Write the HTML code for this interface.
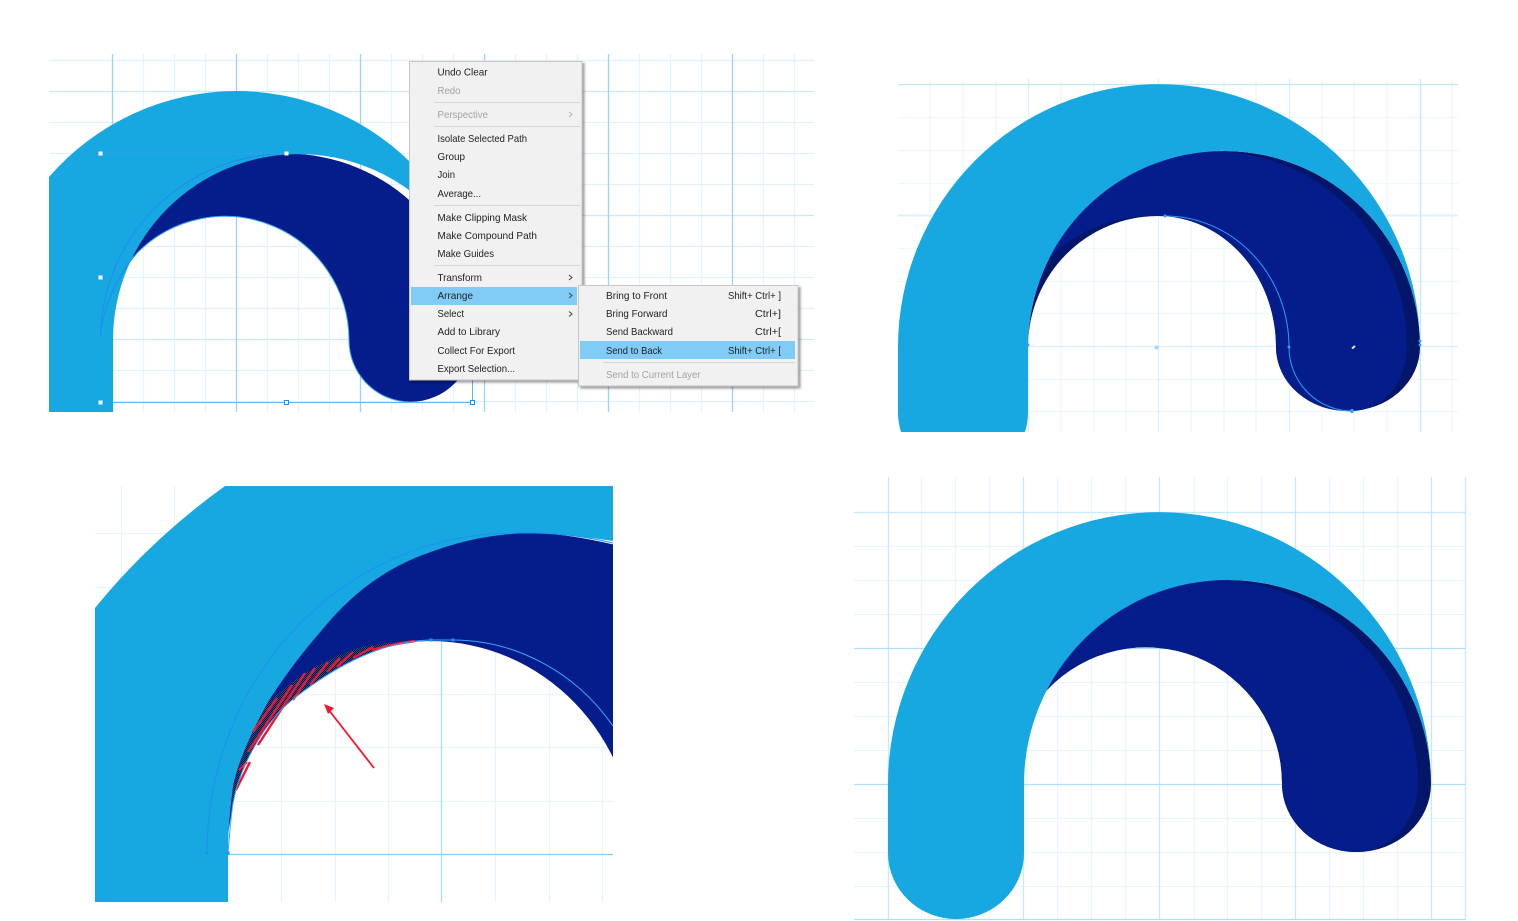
<!DOCTYPE html>
<html><head><meta charset="utf-8"><title>Arrange</title>
<style>
html,body{margin:0;padding:0;background:#fff;width:1518px;height:921px;overflow:hidden}
svg{display:block}
text{font-family:"Liberation Sans",sans-serif;font-size:10.4px;fill:#222}
.g{fill:#a3a3a3}
</style></head><body>
<svg width="1518" height="921" viewBox="0 0 1518 921" xmlns="http://www.w3.org/2000/svg">
<defs>
<clipPath id="c1"><rect x="49" y="54" width="765" height="358"/></clipPath>
<clipPath id="c2"><rect x="898" y="79" width="560" height="353"/></clipPath>
<clipPath id="c3"><rect x="95" y="486" width="518" height="416"/></clipPath>
<filter id="sh" x="-5%" y="-5%" width="112%" height="112%"><feDropShadow dx="2" dy="2" stdDeviation="1.200" flood-color="#000" flood-opacity=".4"/></filter>
<pattern id="d" width="2" height="2" patternUnits="userSpaceOnUse"><rect width="2" height="2" fill="#1b4f8f"/><rect width="1" height="1" fill="#03103a"/><rect x="1" y="1" width="1" height="1" fill="#03103a"/></pattern>
</defs>

<!-- PANEL 1 -->
<g clip-path="url(#c1)" fill="none">
<path stroke="#e4f3fe" stroke-width="1.300" d="M143.500 54V412M174.500 54V412M205.500 54V412M267.500 54V412M298.500 54V412M329.500 54V412M391.500 54V412M422.500 54V412M453.500 54V412M515.500 54V412M546.500 54V412M577.500 54V412M639.500 54V412M670.500 54V412M701.500 54V412M763.500 54V412M794.500 54V412"/>
<path stroke="#e0f1fe" stroke-width="1.300" d="M49 60.500H814M49 122.500H814M49 153.500H814M49 184.500H814M49 246.500H814M49 277.500H814M49 308.500H814M49 370.500H814M49 401.500H814"/>
<path stroke="#cdeafc" stroke-width="1.300" d="M49 91.500H814M49 215.500H814M49 339.500H814"/>
<path stroke="#96d5fa" stroke-width="1.300" d="M112.500 54V412M236.500 54V412M360.500 54V412M484.500 54V412M608.500 54V412M732.500 54V412"/>
<path fill="#051d8b" d="M99.500 340A186.500 186.500 0 0 1 472.500 340A61.750 61.750 0 0 1 349 340A124 124 0 0 0 101 340Z"/>
<path fill="#17a8e2" d="M49 412V177A249 249 0 0 1 236 91A249 249 0 0 1 485 340A186 186 0 0 0 113 340V412Z"/>
<path stroke="#1c8df5" stroke-width="1" d="M100.500 337A186.500 186.500 0 0 1 286 153.500"/>
<path stroke="#1c8df5" stroke-width="1" d="M100.500 337C103 305 118 275 137 253"/>
<path stroke="#3aa5f8" stroke-width="1" d="M137 253A124 124 0 0 1 349 340A61.750 61.750 0 0 0 411 402"/>
<path stroke="#5cb5f8" stroke-width="1" d="M113 402.500H472.500V380"/>
<path stroke="#2fa0e8" stroke-width="1" d="M100 153.500H286"/>
<g fill="#fff"><rect x="98.500" y="151.500" width="4" height="4"/><rect x="284.500" y="151.500" width="4" height="4"/><rect x="98.500" y="275.500" width="4" height="4"/><rect x="98.500" y="400.500" width="4" height="4"/></g>
<g fill="#fff" stroke="#1c8df5"><rect x="284.500" y="400.500" width="4" height="4"/><rect x="470.500" y="400.500" width="4" height="4"/></g>
</g>

<!-- Main context menu -->
<g>
<rect x="409.500" y="61.500" width="172.500" height="318.500" fill="#f1f1f1" stroke="#c8c8c8" filter="url(#sh)"/>
<path stroke="#d6d6d6" d="M434 102.500H580M434 126.500H580M434 205.500H580M434 265.500H580"/>
<rect x="411" y="287" width="166" height="18" fill="#80ccf7"/>
<text x="437.500" y="75.500" textLength="50" lengthAdjust="spacingAndGlyphs">Undo Clear</text>
<text x="437.500" y="94" class="g" textLength="23" lengthAdjust="spacingAndGlyphs">Redo</text>
<text x="437.500" y="118" class="g" textLength="50.500" lengthAdjust="spacingAndGlyphs">Perspective</text>
<text x="437.500" y="142" textLength="89.500" lengthAdjust="spacingAndGlyphs">Isolate Selected Path</text>
<text x="437.500" y="160" textLength="27.500" lengthAdjust="spacingAndGlyphs">Group</text>
<text x="437.500" y="178" textLength="17.500" lengthAdjust="spacingAndGlyphs">Join</text>
<text x="437.500" y="197" textLength="43.500" lengthAdjust="spacingAndGlyphs">Average...</text>
<text x="437.500" y="221" textLength="89.500" lengthAdjust="spacingAndGlyphs">Make Clipping Mask</text>
<text x="437.500" y="239" textLength="99.500" lengthAdjust="spacingAndGlyphs">Make Compound Path</text>
<text x="437.500" y="257" textLength="56.500" lengthAdjust="spacingAndGlyphs">Make Guides</text>
<text x="437.500" y="281" textLength="44.500" lengthAdjust="spacingAndGlyphs">Transform</text>
<text x="437.500" y="299" textLength="35.500" lengthAdjust="spacingAndGlyphs">Arrange</text>
<text x="437.500" y="317" textLength="26.500" lengthAdjust="spacingAndGlyphs">Select</text>
<text x="437.500" y="335" textLength="62.500" lengthAdjust="spacingAndGlyphs">Add to Library</text>
<text x="437.500" y="354" textLength="77.500" lengthAdjust="spacingAndGlyphs">Collect For Export</text>
<text x="437.500" y="372" textLength="77.500" lengthAdjust="spacingAndGlyphs">Export Selection...</text>
<g fill="none" stroke-width="1">
<path stroke="#b5b5b5" d="M569 112l3 2.500l-3 2.500"/>
<path stroke="#444" d="M569 275l3 2.500l-3 2.500M569 293l3 2.500l-3 2.500M569 311.500l3 2.500l-3 2.500"/>
</g>
</g>

<!-- Submenu -->
<g>
<rect x="578.500" y="285.500" width="219.500" height="100.500" fill="#f1f1f1" stroke="#c8c8c8" filter="url(#sh)"/>
<rect x="580" y="341" width="215" height="18" fill="#80ccf7"/>
<path stroke="#d6d6d6" d="M603 362.500H795"/>
<text x="606" y="299" textLength="61" lengthAdjust="spacingAndGlyphs">Bring to Front</text>
<text x="606" y="317" textLength="61.500" lengthAdjust="spacingAndGlyphs">Bring Forward</text>
<text x="606" y="335" textLength="67" lengthAdjust="spacingAndGlyphs">Send Backward</text>
<text x="606" y="354" textLength="56" lengthAdjust="spacingAndGlyphs">Send to Back</text>
<text x="606" y="378" class="g" textLength="94.500" lengthAdjust="spacingAndGlyphs">Send to Current Layer</text>
<text x="728" y="299" textLength="53" lengthAdjust="spacingAndGlyphs">Shift+ Ctrl+ ]</text>
<text x="755" y="317" textLength="26" lengthAdjust="spacingAndGlyphs">Ctrl+]</text>
<text x="755" y="335" textLength="26" lengthAdjust="spacingAndGlyphs">Ctrl+[</text>
<text x="728" y="354" textLength="53" lengthAdjust="spacingAndGlyphs">Shift+ Ctrl+ [</text>
</g>

<!-- PANEL 2 -->
<g clip-path="url(#c2)" fill="none">
<path stroke="#ecf7fe" stroke-width="1.300" d="M930 79V432M963 79V432M996 79V432M1061 79V432M1094 79V432M1126 79V432M1191 79V432M1224 79V432M1256 79V432M1322 79V432M1354 79V432M1387 79V432M1452 79V432M898 117.500H1458M898 150.500H1458M898 183.500H1458M898 248.500H1458M898 281.500H1458M898 313.500H1458M898 379.500H1458M898 411.500H1458"/>
<path stroke="#dbeffd" stroke-width="1.300" d="M1028.500 79V432M1158.500 79V432M1289.500 79V432M898 346.500H1458"/>
<path stroke="#dff1fd" stroke-width="2" d="M898 215.500H1458"/>
<path stroke="#c2e6fb" stroke-width="1.300" d="M1420.500 79V432M898 84.500H1458"/>
<path fill="#03166a" d="M1028 347A196 196 0 0 1 1420 347A72 64 0 0 1 1276 347A118 131 0 0 0 1158 216A130 131 0 0 0 1028 347Z"/>
<path fill="#041d8b" d="M1046 262L1030 240L1100 170L1211 140L1211 151A196 196 0 0 1 1407 347A55 64 0 0 1 1352 411A72 64 0 0 1 1276 347A118 131 0 0 0 1158 216C1110 214 1070 235 1046 262Z"/>
<path fill="#17a8e2" d="M901 432A65 65 0 0 1 898 412V347A261 263 0 0 1 1420 347A196 196 0 0 0 1028 347V412A65 65 0 0 1 1025 432Z"/>
<path stroke="#2e9bf5" stroke-width="1" d="M1165 216A124 131 0 0 1 1289 347A63 64 0 0 0 1352 411"/>
<g fill="#3b9ff6"><circle cx="1165" cy="216" r="1.500"/><circle cx="1289" cy="347" r="1.500"/><circle cx="1352" cy="411" r="2"/><circle cx="1420" cy="341" r="1.500"/><circle cx="1420" cy="345" r="1.500"/><circle cx="1028" cy="345" r="1.500"/><circle cx="1222" cy="150" r="1.200"/></g>
<circle cx="1156.500" cy="347.500" r="2" fill="#a7d4fb"/>
<path stroke="#dfeefc" stroke-width="2" d="M1352 348.500l3-2.500"/>
</g>

<!-- PANEL 3 -->
<g clip-path="url(#c3)" fill="none">
<path stroke="#e6f4fe" stroke-width="1.300" d="M121.500 486V902M174.500 486V902M281.500 486V902M335.500 486V902M388.500 486V902M495.500 486V902M549.500 486V902M602.500 486V902M95 533.500H613M95 587.500H613M95 640.500H613M95 694.500H613M95 747.500H613M95 801.500H613"/>
<path stroke="#a8dcfb" stroke-width="1.300" d="M441.500 486V902"/>
<path stroke="#83cbfa" stroke-width="1.300" d="M228 854.500H613"/>
<path fill="#051d8b" d="M207 853A307 320 0 0 1 514 525L536 533Q575 534 640 551V853H635A205 212 0 0 0 430 641C385 641 340 662 292 700C265 722 240 765 233 803L225 853Z"/>
<path fill="#17a8e2" d="M95 902V608Q150 540 225 486H613V541Q575 535 536 533C495 533 460 541 428 553C385 568 350 595 322 630C300 655 282 680 268 702C250 735 237 765 233 787C230 810 228 830 228 853V902Z"/>
<path fill="url(#d)" d="M232 806L233 787C237 765 250 735 268 702C290 682 320 660 358 648C380 643 400 641 415 641L430 641C385 641 340 662 292 700C265 722 240 765 233 803Z"/>
<g stroke="#f5152f" stroke-width="2.400" fill="none">
<path d="M236 790L250 762"/>
<path d="M239 770L247 762"/>
<path d="M248 752L292 685"/>
<path d="M253 732L277 698"/>
<path d="M258 745L305 673"/>
<path d="M293 700L315 668"/>
<path d="M310 685L328 662"/>
<path d="M327 672L340 658"/>
<path d="M337 667L353 652"/>
<path d="M353 658L373 647"/>
<path d="M372 650C385 646 400 643 415 641"/>
</g>
<path stroke="#f5152f" stroke-width="1.800" d="M374 768L328 709"/>
<path fill="#f5152f" d="M324 704L334 708L328 714Z"/>
<path stroke="#1f8ff5" stroke-width="1" d="M207 853A307 320 0 0 1 514 533L536 533Q575 534 613 543"/>
<path stroke="#3aa5f8" stroke-width="1" d="M228 853C230 830 231 815 233 803C240 765 265 722 292 700C340 662 385 641 431 640H453A200 213 0 0 1 613 726"/>
<g fill="#1f8ff5"><rect x="205.500" y="851.500" width="3" height="3"/><rect x="226.500" y="851.500" width="3" height="3"/><rect x="429.500" y="638.500" width="3" height="3"/><rect x="451.500" y="638.500" width="3" height="3"/></g>
</g>

<!-- PANEL 4 -->
<g fill="none">
<path stroke="#e8f5fe" stroke-width="1.300" d="M921.500 477V920M955.500 477V920M989.500 477V920M1057.500 477V920M1091.500 477V920M1125.500 477V920M1194.500 477V920M1227.500 477V920M1261.500 477V920M1329.500 477V920M1363.500 477V920M1397.500 477V920M854 546.500H1466M854 580.500H1466M854 614.500H1466M854 682.500H1466M854 716.500H1466M854 750.500H1466M854 818.500H1466M854 852.500H1466M854 886.500H1466"/>
<path stroke="#c8e8fc" stroke-width="1.300" d="M888.500 477V920M1023.500 477V920M1159.500 477V920M1295.500 477V920M1431.500 477V920M1465.500 477V920M854 512.500H1466"/>
<path stroke="#aedffb" stroke-width="1.300" d="M854 648.500H1466M854 784.500H1466M854 919.500H1466"/>
<path fill="#03166a" d="M1047 690L1030 660L1110 600L1227.500 570V580A203.500 204 0 0 1 1431 784A74.500 68 0 0 1 1282 784A136 136 0 0 0 1047 690Z"/>
<path fill="#041d8b" d="M1047 690L1030 660L1110 600L1214 570V580A204 204 0 0 1 1418 784A62 68 0 0 1 1356 852A74 68 0 0 1 1282 784A136 136 0 0 0 1047 690Z"/>
<path fill="#17a8e2" d="M888 853V784A271.500 272 0 0 1 1431 784A203.500 204 0 0 0 1024 784V853A68 66 0 0 1 888 853Z"/>
</g>
</svg>
</body></html>
